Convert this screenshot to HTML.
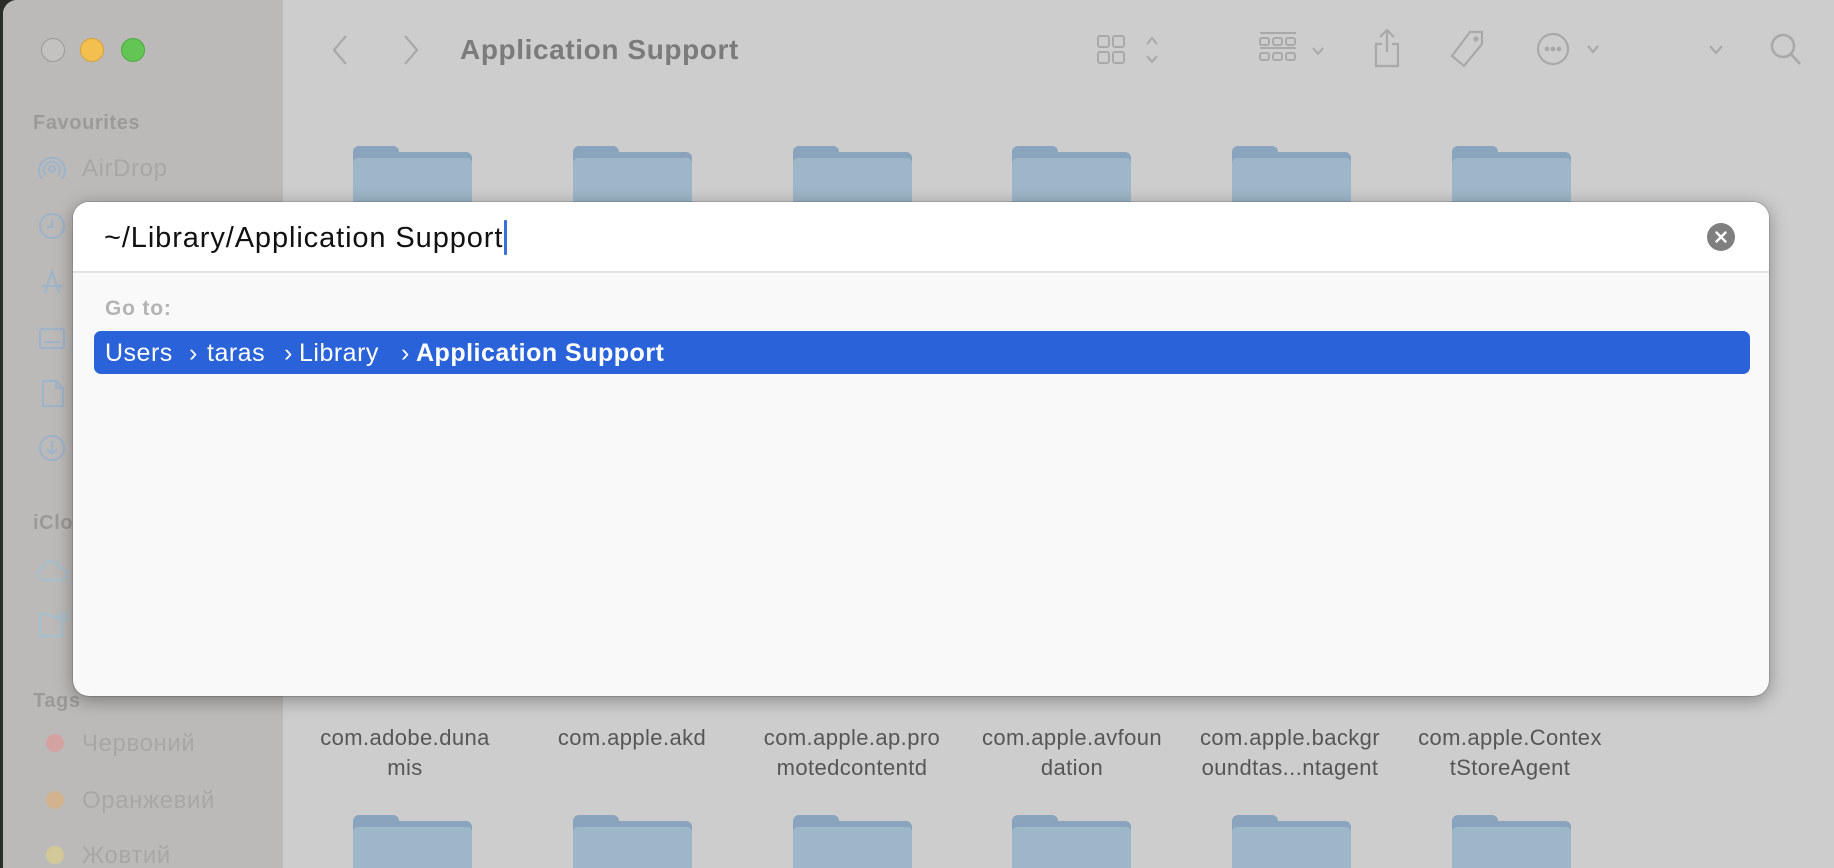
<!DOCTYPE html>
<html><head><meta charset="utf-8"><style>
*{margin:0;padding:0;box-sizing:border-box}
html,body{width:1834px;height:868px;overflow:hidden}
body{background:#2a2e26;font-family:"Liberation Sans","Noto Sans CJK SC",sans-serif;position:relative}
.win{position:absolute;left:3px;top:0;width:1831px;height:868px;background:#cdcdcd;border-top-left-radius:14px;overflow:hidden}
.side{position:absolute;left:0;top:0;width:280px;height:868px;background:#bcbab8}
.a{position:absolute;white-space:nowrap}
.tl{position:absolute;width:24px;height:24px;border-radius:50%;top:38px}
.sh{color:#9c9a98;font-weight:bold;font-size:20px;letter-spacing:.6px}
.si{color:#a9a7a5;font-size:24px;letter-spacing:.6px}
.fold{position:absolute;width:119px;height:110px}
.fold .b{position:absolute;left:0;top:6px;width:119px;height:104px;background:#8aa4bd;border-radius:6px 6px 0 0}
.fold .t{position:absolute;left:0;top:0;width:46px;height:14px;background:#8aa4bd;border-radius:6px 6px 0 0}
.fold .f{position:absolute;left:0;top:12px;width:119px;height:98px;background:#9db6c8;border-radius:5px 5px 0 0}
.lbl{position:absolute;width:220px;text-align:center;color:#565656;font-size:22px;letter-spacing:.4px;line-height:30px}
.dlg{position:absolute;left:73px;top:202px;width:1696px;height:494px;background:#f9f9f9;border-radius:16px;box-shadow:0 4px 18px rgba(0,0,0,.35),0 0 0 1px rgba(0,0,0,.12);overflow:hidden}
.top{position:absolute;left:0;top:0;width:100%;height:71px;background:#fff;border-bottom:2px solid #e3e3e3}
.ic{position:absolute;stroke:#a9a9a9;fill:none;stroke-width:2.2}
.r{font-size:25px;letter-spacing:.5px;color:#fff;top:137px}
</style></head><body>
<div class="win">
 <div class="side">
  <div class="tl" style="left:38px;background:#c4c2c0;border:1px solid #999"></div>
  <div class="tl" style="left:77px;background:#f3bf4f;border:1px solid #d5a23a"></div>
  <div class="tl" style="left:118px;background:#62c554;border:1px solid #4ea842"></div>
  <div class="a sh" style="left:30px;top:112px">Favourites</div>
  <svg class="ic" style="left:34px;top:154px;stroke:#9fb3c9" width="30" height="30"><circle cx="15" cy="15" r="3"/><path d="M9 21a8 8 0 1 1 12 0M5 25a13 13 0 1 1 20 0"/></svg>
  <div class="a si" style="left:79px;top:155px">AirDrop</div>
  <svg class="ic" style="left:34px;top:211px;stroke:#9fb3c9" width="30" height="30"><circle cx="15" cy="15" r="12"/><path d="M15 8v8h-5"/></svg>
  <svg class="ic" style="left:34px;top:266px;stroke:#9fb3c9" width="30" height="30"><path d="M8 27L15 5l7 22M5 20h20"/></svg>
  <svg class="ic" style="left:34px;top:323px;stroke:#9fb3c9" width="30" height="30"><rect x="3" y="6" width="24" height="19" rx="2"/><path d="M7 19h16"/></svg>
  <svg class="ic" style="left:36px;top:378px;stroke:#9fb3c9" width="30" height="30"><path d="M4 3h13l7 7v18H4zM17 3v7h7"/></svg>
  <svg class="ic" style="left:34px;top:433px;stroke:#9fb3c9" width="30" height="30"><circle cx="15" cy="15" r="12"/><path d="M15 8v13M10 16l5 5 5-5"/></svg>
  <div class="a sh" style="left:30px;top:512px">iClo</div>
  <svg class="ic" style="left:32px;top:556px;stroke:#a6bfcc" width="34" height="28"><path d="M8 24a7 7 0 0 1 0-13 9 9 0 0 1 17 1 6 6 0 0 1 1 12z"/></svg>
  <svg class="ic" style="left:34px;top:608px;stroke:#a6bfcc" width="34" height="32"><path d="M3 6h9l3 3h10v19H3z"/><circle cx="26" cy="9" r="4"/></svg>
  <div class="a sh" style="left:30px;top:690px">Tags</div>
  <div class="a" style="left:43px;top:734px;width:18px;height:18px;border-radius:50%;background:#d4a3a1"></div>
  <div class="a si" style="left:79px;top:730px">Червоний</div>
  <div class="a" style="left:43px;top:791px;width:18px;height:18px;border-radius:50%;background:#d3b38e"></div>
  <div class="a si" style="left:79px;top:787px">Оранжевий</div>
  <div class="a" style="left:43px;top:846px;width:18px;height:18px;border-radius:50%;background:#d3c897"></div>
  <div class="a si" style="left:79px;top:842px">Жовтий</div>
 </div>
 <svg class="ic" style="left:325px;top:33px" width="24" height="34"><path d="M18 3L6 17l12 14"/></svg>
 <svg class="ic" style="left:396px;top:33px" width="24" height="34"><path d="M6 3l12 14L6 31"/></svg>
 <div class="a" style="left:457px;top:34px;font-size:28px;letter-spacing:.6px;font-weight:bold;color:#7b7b7b">Application Support</div>
 <svg class="ic" style="left:1093px;top:33px;stroke-width:2" width="70" height="34"><rect x="2" y="3" width="11" height="11" rx="2"/><rect x="17" y="3" width="11" height="11" rx="2"/><rect x="2" y="19" width="11" height="11" rx="2"/><rect x="17" y="19" width="11" height="11" rx="2"/><path d="M51 11l5-6 5 6M51 23l5 6 5-6"/></svg>
 <svg class="ic" style="left:1254px;top:30px;stroke-width:2" width="80" height="40"><path d="M3 3h36M3 18h36"/><rect x="3" y="8" width="9" height="7" rx="2"/><rect x="16" y="8" width="9" height="7" rx="2"/><rect x="29" y="8" width="9" height="7" rx="2"/><rect x="3" y="23" width="9" height="7" rx="2"/><rect x="16" y="23" width="9" height="7" rx="2"/><rect x="29" y="23" width="9" height="7" rx="2"/><path d="M56 18l5 6 5-6"/></svg>
 <svg class="ic" style="left:1368px;top:27px" width="32" height="44"><path d="M16 3v22M9 10l7-7 7 7M11 17H5v22h22V17h-6"/></svg>
 <svg class="ic" style="left:1445px;top:28px" width="40" height="42"><path d="M22 4h12v12L16 38 4 28z"/><circle cx="28" cy="11" r="1.5"/></svg>
 <svg class="ic" style="left:1533px;top:32px" width="70" height="36"><circle cx="17" cy="17" r="15"/><circle cx="11" cy="17" r="1.3" fill="#a9a9a9"/><circle cx="17" cy="17" r="1.3" fill="#a9a9a9"/><circle cx="23" cy="17" r="1.3" fill="#a9a9a9"/><path d="M52 14l5 6 5-6"/></svg>
 <svg class="ic" style="left:1704px;top:40px" width="20" height="20"><path d="M3 6l6 7 6-7"/></svg>
 <svg class="ic" style="left:1765px;top:31px;stroke-width:2.6" width="36" height="38"><circle cx="15" cy="15" r="11"/><path d="M23 23l9 10"/></svg>

 <div class="fold" style="left:350px;top:146px"><div class="t"></div><div class="b"></div><div class="f"></div></div>
 <div class="fold" style="left:570px;top:146px"><div class="t"></div><div class="b"></div><div class="f"></div></div>
 <div class="fold" style="left:790px;top:146px"><div class="t"></div><div class="b"></div><div class="f"></div></div>
 <div class="fold" style="left:1009px;top:146px"><div class="t"></div><div class="b"></div><div class="f"></div></div>
 <div class="fold" style="left:1229px;top:146px"><div class="t"></div><div class="b"></div><div class="f"></div></div>
 <div class="fold" style="left:1449px;top:146px"><div class="t"></div><div class="b"></div><div class="f"></div></div>

 <div class="lbl" style="left:292px;top:723px">com.adobe.duna<br>mis</div>
 <div class="lbl" style="left:519px;top:723px">com.apple.akd</div>
 <div class="lbl" style="left:739px;top:723px">com.apple.ap.pro<br>motedcontentd</div>
 <div class="lbl" style="left:959px;top:723px">com.apple.avfoun<br>dation</div>
 <div class="lbl" style="left:1177px;top:723px">com.apple.backgr<br>oundtas...ntagent</div>
 <div class="lbl" style="left:1397px;top:723px">com.apple.Contex<br>tStoreAgent</div>

 <div class="fold" style="left:350px;top:815px;height:53px"><div class="t"></div><div class="b"></div><div class="f"></div></div>
 <div class="fold" style="left:570px;top:815px"><div class="t"></div><div class="b"></div><div class="f"></div></div>
 <div class="fold" style="left:790px;top:815px"><div class="t"></div><div class="b"></div><div class="f"></div></div>
 <div class="fold" style="left:1009px;top:815px"><div class="t"></div><div class="b"></div><div class="f"></div></div>
 <div class="fold" style="left:1229px;top:815px"><div class="t"></div><div class="b"></div><div class="f"></div></div>
 <div class="fold" style="left:1449px;top:815px"><div class="t"></div><div class="b"></div><div class="f"></div></div>
</div>

<div class="dlg">
 <div class="top">
  <div class="a" style="left:31px;top:20px;font-size:29px;letter-spacing:.9px;color:#111">~/Library/Application Support</div>
  <div class="a" style="left:431px;top:18px;width:3px;height:35px;background:#3b6fd8;border-radius:1px"></div>
  <div class="a" style="left:1634px;top:21px;width:28px;height:28px;border-radius:50%;background:#7f7f7f"></div>
  <svg class="a" style="left:1634px;top:21px" width="28" height="28"><path d="M9.5 9.5l9 9M18.5 9.5l-9 9" stroke="#fff" stroke-width="2.4" stroke-linecap="round"/></svg>
 </div>
 <div class="a" style="left:32px;top:95px;font-size:21px;letter-spacing:.8px;font-weight:bold;color:#b4b4b4">Go to:</div>
 <div class="a" style="left:21px;top:129px;width:1656px;height:43px;background:#2962d9;border-radius:7px"></div>
 <div class="a r" style="left:32px">Users</div>
 <div class="a r" style="left:116px">›</div>
 <div class="a r" style="left:134px">taras</div>
 <div class="a r" style="left:211px">›</div>
 <div class="a r" style="left:226px">Library</div>
 <div class="a r" style="left:328px">›</div>
 <div class="a r" style="left:343px;font-weight:bold">Application Support</div>
</div>
</body></html>
